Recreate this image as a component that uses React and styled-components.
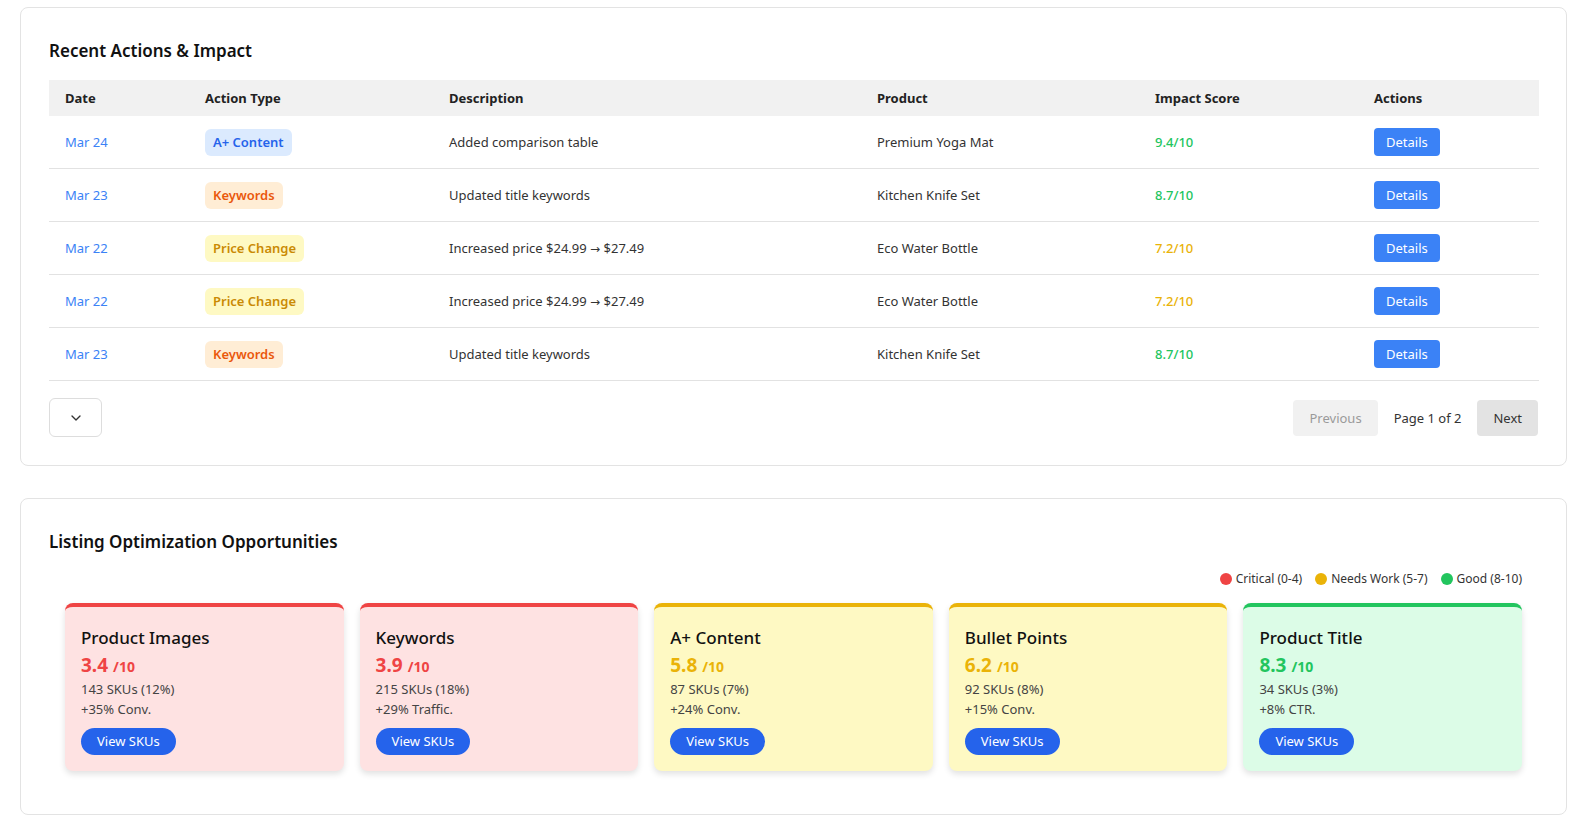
import React from 'react';
import styled, { createGlobalStyle } from 'styled-components';
import { ChevronDown } from 'lucide-react';

const GlobalStyle = createGlobalStyle`
  * { box-sizing: border-box; }
  body {
    margin: 0;
    background: #fff;
    font-family: "Noto Sans", "Open Sans", sans-serif;
    color: #333;
  }
`;

const Page = styled.div`
  padding: 7px 20px 16px;
  display: flex;
  flex-direction: column;
  gap: 32px;
`;

const Card = styled.section`
  border: 1px solid #e3e3e3;
  border-radius: 8px;
  padding: 29px 28px 28px;
  background: #fff;
`;

const Title = styled.h2`
  margin: 0 0 15px;
  font-size: 17px;
  line-height: 28px;
  font-weight: 600;
  color: #111;
`;

const Table = styled.table`
  width: 100%;
  border-collapse: collapse;
  table-layout: fixed;
  font-size: 13px;
`;

const Th = styled.th`
  text-align: left;
  background: #f1f1f1;
  padding: 8px 16px;
  line-height: 20px;
  font-weight: 700;
  color: #222;
`;

const Td = styled.td`
  padding: 12px 16px;
  line-height: 20px;
  border-bottom: 1px solid #e2e2e2;
  color: ${(p) => p.$color || '#333'};
  font-weight: ${(p) => p.$weight || 400};
`;

const Arrow = styled.span`
  font-family: "DejaVu Sans", sans-serif;
  font-size: 12px;
`;

const badgeColors = {
  'A+ Content': { bg: '#dbeafe', fg: '#2563eb' },
  Keywords: { bg: '#ffedd5', fg: '#ea580c' },
  'Price Change': { bg: '#fef9c3', fg: '#ca8a04' },
};

const Badge = styled.span`
  display: inline-block;
  padding: 3px 8px;
  border-radius: 6px;
  line-height: 21px;
  font-weight: 600;
  background: ${(p) => badgeColors[p.$type].bg};
  color: ${(p) => badgeColors[p.$type].fg};
`;

const DetailsButton = styled.button`
  border: 0;
  border-radius: 4px;
  background: #3b82f6;
  color: #fff;
  font: inherit;
  font-size: 13px;
  line-height: 20px;
  padding: 4px 12px;
`;

const Footer = styled.div`
  display: flex;
  justify-content: space-between;
  align-items: center;
  margin-top: 17px;
`;

const ToggleButton = styled.button`
  width: 53px;
  height: 39px;
  border: 1px solid #ddd;
  border-radius: 6px;
  background: #fff;
  color: #333;
  display: flex;
  align-items: center;
  justify-content: center;
`;

const Pager = styled.div`
  display: flex;
  align-items: center;
  gap: 16px;
  font-size: 13px;
  color: #333;
`;

const PageButton = styled.button`
  border: 0;
  border-radius: 4px;
  height: 36px;
  padding: 0 16px;
  font: inherit;
  background: ${(p) => (p.disabled ? '#f1f1f1' : '#e3e3e3')};
  color: ${(p) => (p.disabled ? '#9a9a9a' : '#333')};
`;

const Inner = styled.div`
  padding: 0 16px 15px;
`;

const Legend = styled.div`
  display: flex;
  justify-content: flex-end;
  gap: 13px;
  font-size: 12px;
  line-height: 16px;
  color: #333;
  margin-bottom: 16px;
`;

const LegendItem = styled.span`
  display: flex;
  align-items: center;
  gap: 4px;
`;

const Dot = styled.span`
  width: 12px;
  height: 12px;
  border-radius: 50%;
  background: ${(p) => p.$color};
`;

const Grid = styled.div`
  display: grid;
  grid-template-columns: repeat(5, 1fr);
  gap: 16px;
`;

const levels = {
  critical: { main: '#ef4444', bg: '#fee2e2' },
  work: { main: '#eab308', bg: '#fef9c3' },
  good: { main: '#22c55e', bg: '#dcfce7' },
};

const OppCard = styled.div`
  background: ${(p) => levels[p.$level].bg};
  border-top: 4px solid ${(p) => levels[p.$level].main};
  border-radius: 8px;
  padding: 17px 16px 16px;
  box-shadow: 0 3px 6px rgba(0, 0, 0, 0.12);
`;

const OppTitle = styled.h3`
  margin: 0;
  font-size: 17px;
  line-height: 27px;
  font-weight: 500;
  color: #111;
`;

const Score = styled.div`
  margin-top: 2px;
  line-height: 24px;
  font-size: 19px;
  font-weight: 700;
  color: ${(p) => levels[p.$level].main};

  > small {
    font-size: 14px;
    margin-left: 5px;
  }
`;

const Meta = styled.div`
  font-size: 13px;
  line-height: 20px;
  color: #444;
`;

const ViewButton = styled.button`
  margin-top: 9px;
  border: 0;
  border-radius: 999px;
  background: #2563eb;
  color: #fff;
  font: inherit;
  font-size: 13px;
  line-height: 19px;
  padding: 4px 16px;
`;

const actions = [
  { date: 'Mar 24', type: 'A+ Content', from: null, desc: 'Added comparison table', product: 'Premium Yoga Mat', score: 9.4 },
  { date: 'Mar 23', type: 'Keywords', from: null, desc: 'Updated title keywords', product: 'Kitchen Knife Set', score: 8.7 },
  { date: 'Mar 22', type: 'Price Change', from: ['Increased price $24.99', '$27.49'], product: 'Eco Water Bottle', score: 7.2 },
  { date: 'Mar 22', type: 'Price Change', from: ['Increased price $24.99', '$27.49'], product: 'Eco Water Bottle', score: 7.2 },
  { date: 'Mar 23', type: 'Keywords', from: null, desc: 'Updated title keywords', product: 'Kitchen Knife Set', score: 8.7 },
];

const opportunities = [
  { title: 'Product Images', score: '3.4', level: 'critical', skus: '143 SKUs (12%)', lift: '+35% Conv.' },
  { title: 'Keywords', score: '3.9', level: 'critical', skus: '215 SKUs (18%)', lift: '+29% Traffic.' },
  { title: 'A+ Content', score: '5.8', level: 'work', skus: '87 SKUs (7%)', lift: '+24% Conv.' },
  { title: 'Bullet Points', score: '6.2', level: 'work', skus: '92 SKUs (8%)', lift: '+15% Conv.' },
  { title: 'Product Title', score: '8.3', level: 'good', skus: '34 SKUs (3%)', lift: '+8% CTR.' },
];

const columns = [
  ['Date', 140],
  ['Action Type', 244],
  ['Description', 428],
  ['Product', 278],
  ['Impact Score', 219],
  ['Actions', 181],
];

export default function App() {
  return (
    <>
      <GlobalStyle />
      <Page>
        <Card>
          <Title>Recent Actions &amp; Impact</Title>
          <Table>
            <colgroup>
              {columns.map(([name, w]) => (
                <col key={name} style={{ width: w }} />
              ))}
            </colgroup>
            <thead>
              <tr>
                {columns.map(([name]) => (
                  <Th key={name}>{name}</Th>
                ))}
              </tr>
            </thead>
            <tbody>
              {actions.map((a, i) => (
                <tr key={i}>
                  <Td $color="#3b82f6">{a.date}</Td>
                  <Td>
                    <Badge $type={a.type}>{a.type}</Badge>
                  </Td>
                  <Td>
                    {a.from ? (
                      <>
                        {a.from[0]} <Arrow>→</Arrow> {a.from[1]}
                      </>
                    ) : (
                      a.desc
                    )}
                  </Td>
                  <Td>{a.product}</Td>
                  <Td $color={a.score >= 8 ? '#22c55e' : '#eab308'} $weight={500}>
                    {a.score}/10
                  </Td>
                  <Td>
                    <DetailsButton>Details</DetailsButton>
                  </Td>
                </tr>
              ))}
            </tbody>
          </Table>
          <Footer>
            <ToggleButton>
              <ChevronDown size={16} strokeWidth={2} />
            </ToggleButton>
            <Pager>
              <PageButton disabled>Previous</PageButton>
              <span>Page 1 of 2</span>
              <PageButton>Next</PageButton>
            </Pager>
          </Footer>
        </Card>

        <Card>
          <Title>Listing Optimization Opportunities</Title>
          <Inner>
            <Legend>
              <LegendItem><Dot $color="#ef4444" />Critical (0-4)</LegendItem>
              <LegendItem><Dot $color="#eab308" />Needs Work (5-7)</LegendItem>
              <LegendItem><Dot $color="#22c55e" />Good (8-10)</LegendItem>
            </Legend>
            <Grid>
              {opportunities.map((o) => (
                <OppCard key={o.title} $level={o.level}>
                  <OppTitle>{o.title}</OppTitle>
                  <Score $level={o.level}>
                    {o.score}<small>/10</small>
                  </Score>
                  <Meta>{o.skus}</Meta>
                  <Meta>{o.lift}</Meta>
                  <ViewButton>View SKUs</ViewButton>
                </OppCard>
              ))}
            </Grid>
          </Inner>
        </Card>
      </Page>
    </>
  );
}
